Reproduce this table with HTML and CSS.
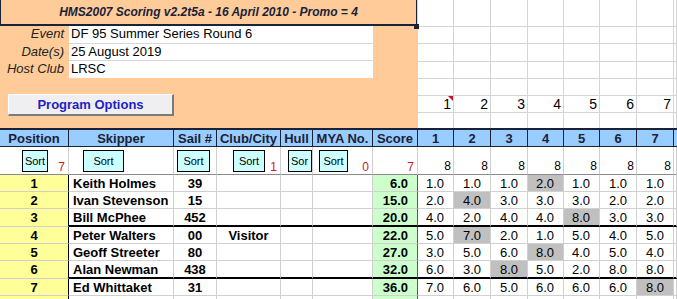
FILE: index.html
```html
<!DOCTYPE html>
<html>
<head>
<meta charset="utf-8">
<link rel="stylesheet" href="styles.css">
</head>
<body>
<div class="sheet">
  <div class="top">
    <div class="panel">
      <div class="title">HMS2007 Scoring v2.2t5a - 16 April 2010 - Promo = 4</div>
      <div class="info">
        <div class="irow first"><span class="lbl">Event</span><span class="val">DF 95 Summer Series Round 6</span></div>
        <div class="irow"><span class="lbl">Date(s)</span><span class="val">25 August 2019</span></div>
        <div class="irow last"><span class="lbl">Host Club</span><span class="val">LRSC</span></div>
      </div>
      <div class="btnrow"><div class="pbtn">Program Options</div></div>
    </div>
    <div class="tgrid">
      <div class="tc h1"></div><div class="tc h1"></div><div class="tc h1"></div><div class="tc h1"></div><div class="tc h1"></div><div class="tc h1"></div><div class="tc h1"></div><div class="tc h1"></div>
      <div class="tc"></div><div class="tc"></div><div class="tc"></div><div class="tc"></div><div class="tc"></div><div class="tc"></div><div class="tc"></div><div class="tc"></div>
      <div class="tc"></div><div class="tc"></div><div class="tc"></div><div class="tc"></div><div class="tc"></div><div class="tc"></div><div class="tc"></div><div class="tc"></div>
      <div class="tc"></div><div class="tc"></div><div class="tc"></div><div class="tc"></div><div class="tc"></div><div class="tc"></div><div class="tc"></div><div class="tc"></div>
      <div class="tc"></div><div class="tc"></div><div class="tc"></div><div class="tc"></div><div class="tc"></div><div class="tc"></div><div class="tc"></div><div class="tc"></div>
      <div class="tc num">1<span class="comment"></span></div><div class="tc num">2</div><div class="tc num">3</div><div class="tc num">4</div><div class="tc num">5</div><div class="tc num">6</div><div class="tc num">7</div><div class="tc"></div>
      <div class="tc lr"></div><div class="tc lr"></div><div class="tc lr"></div><div class="tc lr"></div><div class="tc lr"></div><div class="tc lr"></div><div class="tc lr"></div><div class="tc lr"></div>
    </div>
    <div class="handle"></div>
  </div>

  <div class="main">
    <div class="row hdr">
      <div class="c">Position</div><div class="c">Skipper</div><div class="c">Sail #</div><div class="c">Club/City</div><div class="c">Hull</div><div class="c">MYA No.</div><div class="c">Score</div>
      <div class="c">1</div><div class="c">2</div><div class="c">3</div><div class="c">4</div><div class="c">5</div><div class="c">6</div><div class="c">7</div><div class="c"></div>
    </div>
    <div class="row srt">
      <div class="c s-pos"><div class="sbtn w26">Sort</div><span class="red">7</span></div>
      <div class="c s-sk"><div class="sbtn w41">Sort</div></div>
      <div class="c s-sail"><div class="sbtn w33">Sort</div></div>
      <div class="c s-club"><div class="sbtn w32">Sort</div><span class="red">1</span></div>
      <div class="c s-hull"><div class="sbtn w24 clip">Sor</div></div>
      <div class="c s-mya"><div class="sbtn w29">Sort</div><span class="red">0</span></div>
      <div class="c"><span class="red">7</span></div>
      <div class="c"><span class="eight">8</span></div><div class="c"><span class="eight">8</span></div><div class="c"><span class="eight">8</span></div><div class="c"><span class="eight">8</span></div><div class="c"><span class="eight">8</span></div><div class="c"><span class="eight">8</span></div><div class="c"><span class="eight">8</span></div><div class="c"></div>
    </div>

    <div class="row d">
      <div class="c pos">1</div><div class="c sk">Keith Holmes</div><div class="c ctr">39</div><div class="c ctr"></div><div class="c"></div><div class="c"></div><div class="c score">6.0</div>
      <div class="c r">1.0</div><div class="c r">1.0</div><div class="c r">1.0</div><div class="c r g">2.0</div><div class="c r">1.0</div><div class="c r">1.0</div><div class="c r">1.0</div><div class="c"></div>
    </div>
    <div class="row d">
      <div class="c pos">2</div><div class="c sk">Ivan Stevenson</div><div class="c ctr">15</div><div class="c ctr"></div><div class="c"></div><div class="c"></div><div class="c score">15.0</div>
      <div class="c r">2.0</div><div class="c r g">4.0</div><div class="c r">3.0</div><div class="c r">3.0</div><div class="c r">3.0</div><div class="c r">2.0</div><div class="c r">2.0</div><div class="c"></div>
    </div>
    <div class="row d sep">
      <div class="c pos">3</div><div class="c sk">Bill McPhee</div><div class="c ctr">452</div><div class="c ctr"></div><div class="c"></div><div class="c"></div><div class="c score">20.0</div>
      <div class="c r">4.0</div><div class="c r">2.0</div><div class="c r">4.0</div><div class="c r">4.0</div><div class="c r g">8.0</div><div class="c r">3.0</div><div class="c r">3.0</div><div class="c"></div>
    </div>
    <div class="row d">
      <div class="c pos">4</div><div class="c sk">Peter Walters</div><div class="c ctr">00</div><div class="c ctr">Visitor</div><div class="c"></div><div class="c"></div><div class="c score">22.0</div>
      <div class="c r">5.0</div><div class="c r g">7.0</div><div class="c r">2.0</div><div class="c r">1.0</div><div class="c r">5.0</div><div class="c r">4.0</div><div class="c r">5.0</div><div class="c"></div>
    </div>
    <div class="row d">
      <div class="c pos">5</div><div class="c sk">Geoff Streeter</div><div class="c ctr">80</div><div class="c ctr"></div><div class="c"></div><div class="c"></div><div class="c score">27.0</div>
      <div class="c r">3.0</div><div class="c r">5.0</div><div class="c r">6.0</div><div class="c r g">8.0</div><div class="c r">4.0</div><div class="c r">5.0</div><div class="c r">4.0</div><div class="c"></div>
    </div>
    <div class="row d sep">
      <div class="c pos">6</div><div class="c sk">Alan Newman</div><div class="c ctr">438</div><div class="c ctr"></div><div class="c"></div><div class="c"></div><div class="c score">32.0</div>
      <div class="c r">6.0</div><div class="c r">3.0</div><div class="c r g">8.0</div><div class="c r">5.0</div><div class="c r">2.0</div><div class="c r">8.0</div><div class="c r">8.0</div><div class="c"></div>
    </div>
    <div class="row d">
      <div class="c pos">7</div><div class="c sk">Ed Whittaket</div><div class="c ctr">31</div><div class="c ctr"></div><div class="c"></div><div class="c"></div><div class="c score">36.0</div>
      <div class="c r">7.0</div><div class="c r">6.0</div><div class="c r">5.0</div><div class="c r">6.0</div><div class="c r">6.0</div><div class="c r">6.0</div><div class="c r g">8.0</div><div class="c"></div>
    </div>
    <div class="row d">
      <div class="c pos"></div><div class="c sk"></div><div class="c"></div><div class="c"></div><div class="c"></div><div class="c"></div><div class="c score"></div>
      <div class="c"></div><div class="c"></div><div class="c"></div><div class="c"></div><div class="c"></div><div class="c"></div><div class="c"></div><div class="c"></div>
    </div>
  </div>
</div>
</body>
</html>
```
FILE: styles.css
```css
* { box-sizing: border-box; }
html, body { margin: 0; padding: 0; background: #fff; }
body {
  font-family: "Liberation Sans", Arial, sans-serif;
  font-size: 13px;
  color: #000;
  width: 677px;
  height: 299px;
  overflow: hidden;
}
.sheet { width: 677px; }

/* top area */
.top { display: flex; height: 128px; position: relative; }
.panel { width: 417px; background: #FFCC99; display: flex; flex-direction: column; }
.title {
  height: 26px;
  border-left: 1px solid #1a2238;
  border-right: 1px solid #1a2238;
  border-bottom: 2px solid #1a2238;
  font-weight: bold;
  font-style: italic;
  font-size: 12px;
  color: #1a2238;
  display: flex;
  align-items: center;
  justify-content: center;
}
.irow { display: flex; height: 17px; }
.irow.first { height: 18px; }
.lbl {
  width: 69px;
  text-align: right;
  padding-right: 5px;
  font-style: italic;
  color: #222;
  line-height: 16px;
}
.val {
  width: 304px;
  background: #fff;
  border-bottom: 1px solid #d8d8d8;
  padding-left: 2px;
  line-height: 16px;
}
.irow.last .val { border-bottom: none; }
.btnrow { padding: 16px 0 0 8px; }
.pbtn {
  width: 166px;
  height: 22px;
  background: #efeff1;
  border-top: 1px solid #fff;
  border-left: 1px solid #fff;
  border-right: 2px solid #7b7b7b;
  border-bottom: 2px solid #7b7b7b;
  color: #1f1fc4;
  font-weight: bold;
  display: flex;
  align-items: center;
  justify-content: center;
}

.tgrid {
  width: 260px;
  display: grid;
  grid-template-columns: 36px 37px 37px 36px 36px 37px 37px 3px;
  grid-template-rows: 27px 17px 18px 17px 17px 17px 15px;
  border-left: 1px solid #d4d4d4;
}
.tc {
  border-right: 1px solid #d4d4d4;
  border-bottom: 1px solid #d4d4d4;
  position: relative;
}
.tc.lr { border-bottom: none; }
.tc.num {
  display: flex;
  align-items: flex-end;
  justify-content: flex-end;
  padding-right: 2px;
  font-size: 14px;
  line-height: 15px;
}
.comment {
  position: absolute;
  top: 0;
  right: 0;
  width: 0;
  height: 0;
  border-top: 5px solid #c8102e;
  border-left: 5px solid transparent;
}
.handle {
  position: absolute;
  left: 414px;
  top: 24px;
  width: 5px;
  height: 5px;
  background: #1a2238;
}

/* main grid */
.row {
  display: grid;
  grid-template-columns: 69px 105px 43px 64px 32px 60px 45px 36px 37px 37px 36px 36px 37px 37px 3px;
}
.c {
  border-right: 1px solid #d0d0d0;
  border-bottom: 1px solid #d0d0d0;
  display: flex;
  align-items: center;
  white-space: nowrap;
  overflow: hidden;
}
.hdr { border-top: 2px solid #1a2238; background: #99CCFF; }
.hdr .c {
  height: 17px;
  border-color: #1a2238;
  justify-content: center;
  font-weight: bold;
  color: #1a2238;
}
.hdr .c:last-child { border-right: none; }

.srt .c { height: 28px; border-bottom-color: #8a8a8a; }
.sbtn {
  height: 22px;
  background: #CCFFFF;
  border: 1px solid #000;
  font-size: 11px;
  display: flex;
  align-items: center;
  justify-content: center;
  overflow: hidden;
}
.sbtn.clip { justify-content: flex-start; padding-left: 2px; }
.w24 { width: 24px; }
.w26 { width: 26px; }
.w29 { width: 29px; }
.w32 { width: 32px; }
.w33 { width: 33px; }
.w41 { width: 41px; }
.s-pos { padding-left: 22px; }
.s-sk { padding-left: 14px; }
.s-sail { padding-left: 3px; }
.s-club { padding-left: 16px; }
.s-hull { padding-left: 7px; }
.s-mya { padding-left: 6px; }
.red {
  color: #d01818;
  font-size: 12px;
  margin-left: auto;
  align-self: flex-end;
  padding-right: 3px;
  line-height: 14px;
}
.eight {
  margin-left: auto;
  align-self: flex-end;
  padding-right: 2px;
  font-size: 12px;
  line-height: 15px;
}

.d .c { height: 17px; }
.d.sep .c { height: 18px; }
.d.sep .c:not(.pos) { border-bottom: 2px solid #000; }
.d .pos {
  background: #FFFF99;
  justify-content: center;
  font-weight: bold;
  border-right-color: #000;
}
.sk { font-weight: bold; padding-left: 4px; }
.ctr { font-weight: bold; justify-content: center; }
.score {
  background: #CCFFCC;
  font-weight: bold;
  justify-content: flex-end;
  padding-right: 9px;
  border-right-color: #5a5a5a !important;
}
.r { justify-content: flex-end; padding-right: 9px; }
.g { background: #C0C0C0; }
```
